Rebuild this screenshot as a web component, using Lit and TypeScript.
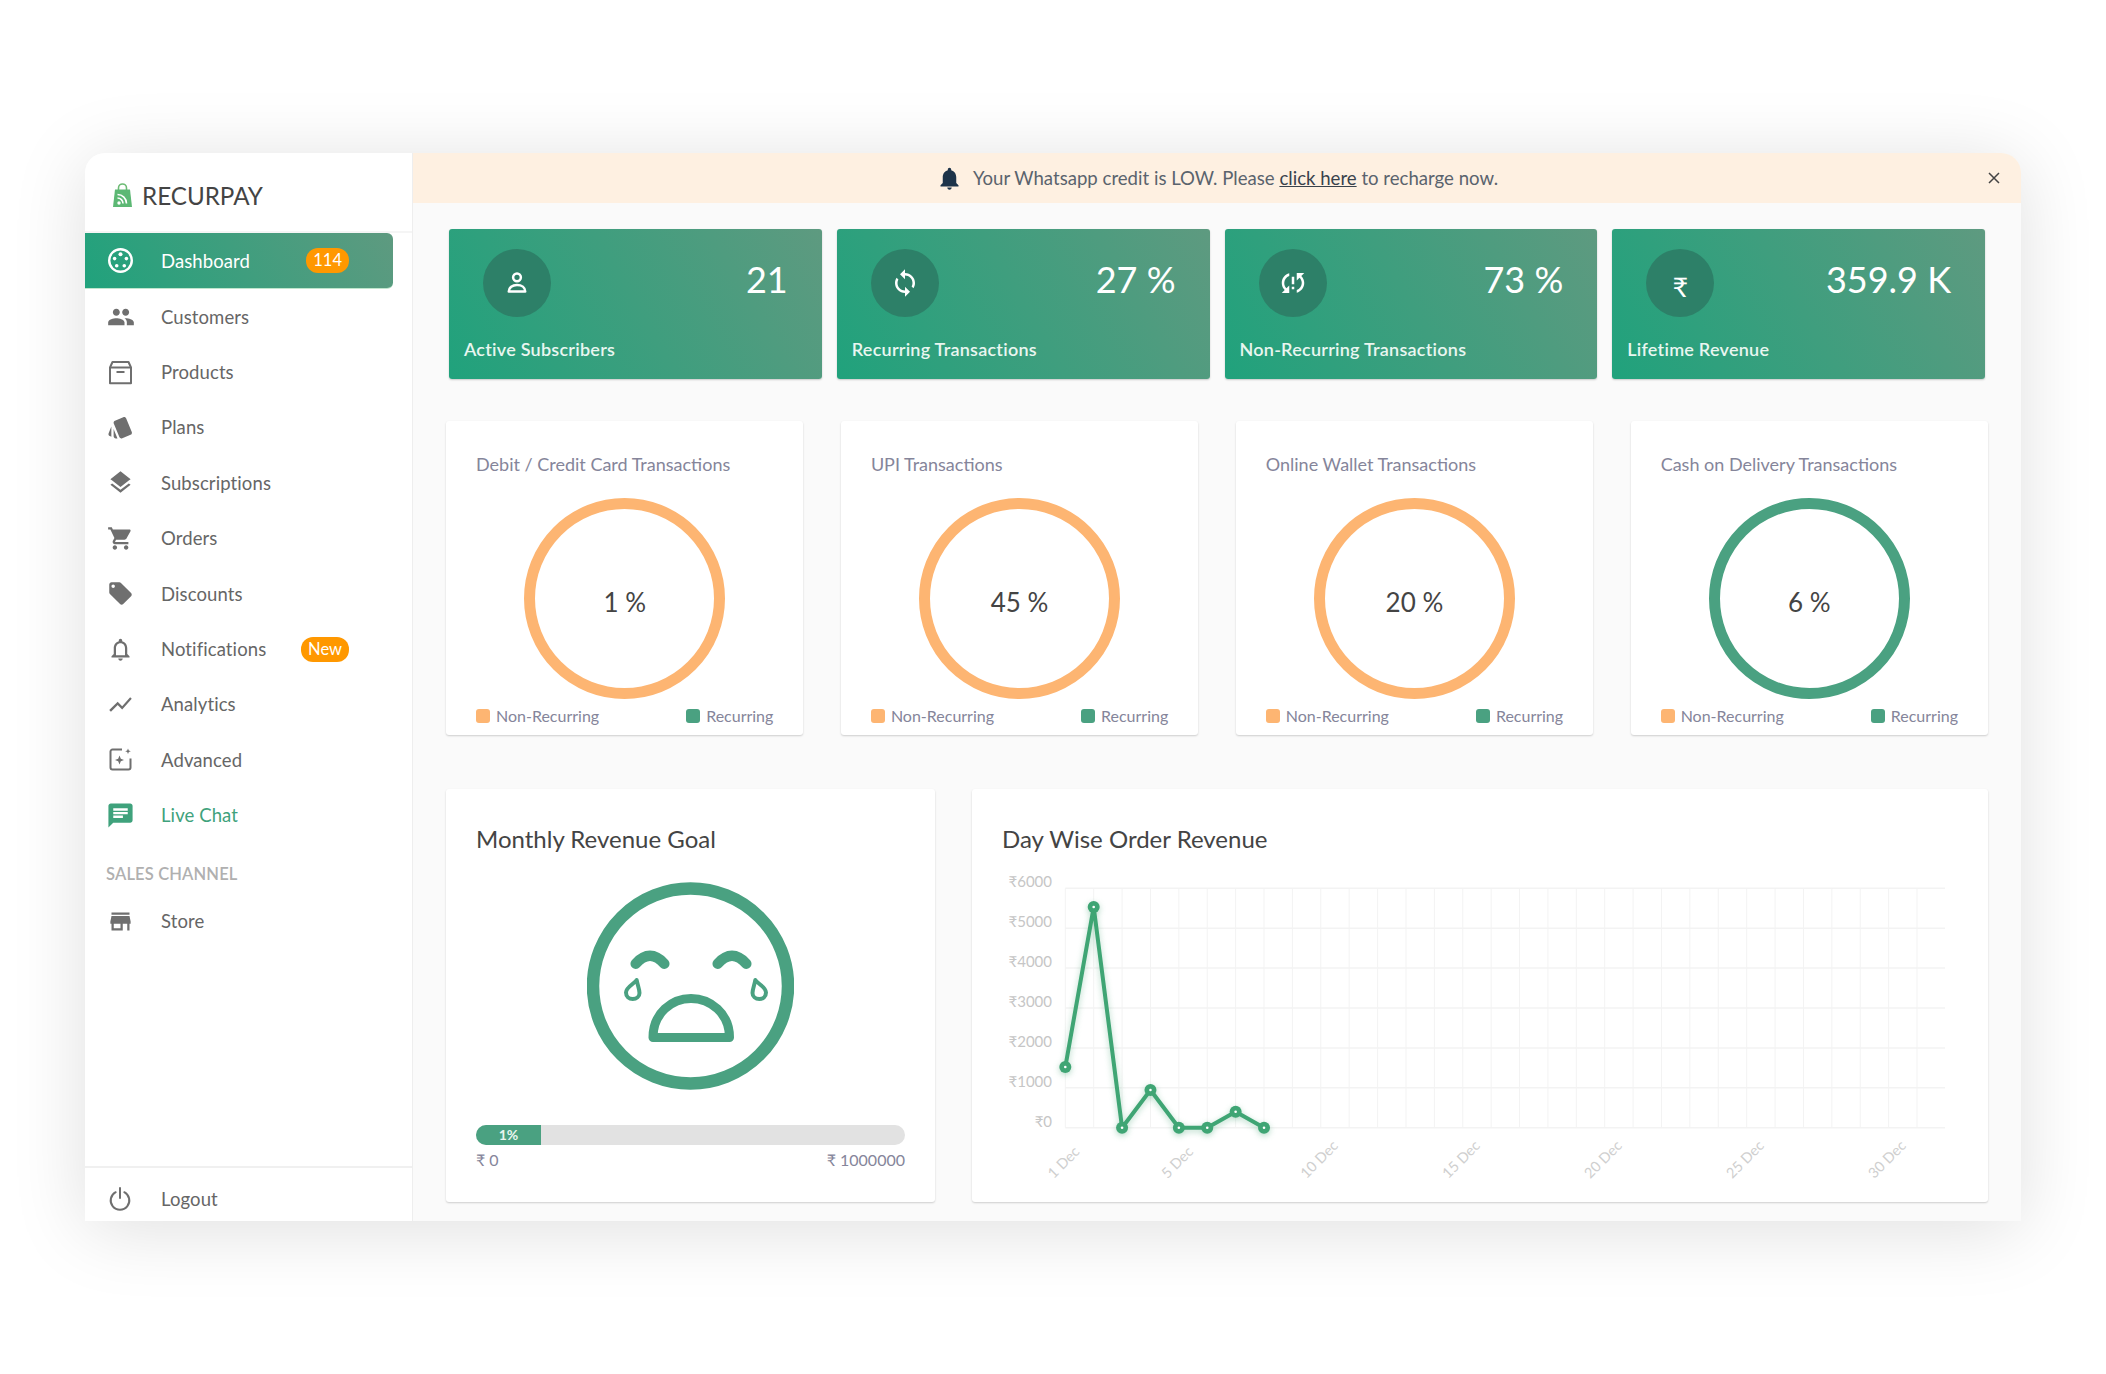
import { LitElement, css, html, svg } from "lit";
import { customElement } from "lit/decorators.js";

const icon = (d: string, size = 27) => html`<svg class="ic" width=${size} height=${size} viewBox="0 0 24 24" fill="currentColor"><path d=${d}></path></svg>`;

const ICONS: Record<string, any> = {
  dashboard: html`<svg class="ic" width="27" height="27" viewBox="0 0 27 27" fill="none"><circle cx="13.5" cy="13.5" r="11.3" stroke="currentColor" stroke-width="2.4"></circle><g fill="currentColor"><circle cx="13.5" cy="7.2" r="2"></circle><circle cx="7.6" cy="11.6" r="1.8"></circle><circle cx="19.4" cy="11.6" r="1.8"></circle><circle cx="9.7" cy="18.8" r="1.8"></circle><circle cx="17.3" cy="18.8" r="1.8"></circle></g></svg>`,
  customers: icon("M16 11c1.66 0 2.99-1.34 2.99-3S17.66 5 16 5c-1.66 0-3 1.34-3 3s1.34 3 3 3zm-8 0c1.66 0 2.99-1.34 2.99-3S9.66 5 8 5C6.34 5 5 6.34 5 8s1.34 3 3 3zm0 2c-2.33 0-7 1.17-7 3.5V19h14v-2.5c0-2.33-4.67-3.5-7-3.5zm8 0c-.29 0-.62.02-.97.05 1.16.84 1.97 1.97 1.97 3.45V19h6v-2.5c0-2.33-4.67-3.5-7-3.5z", 28),
  products: html`<svg class="ic" width="27" height="27" viewBox="0 0 27 27" fill="none" stroke="currentColor" stroke-width="2"><path d="M3 8.500 5.500 3h16L24 8.500V24.200H3z" stroke-linejoin="round"></path><path d="M3 8.500h21"></path><path d="M9.500 13h8"></path></svg>`,
  plans: icon("M2.53 19.65l1.34.56v-9.03l-2.43 5.86c-.41 1.02.08 2.19 1.09 2.61zm19.5-3.7L17.07 3.98c-.31-.75-1.04-1.21-1.81-1.23-.26 0-.53.04-.79.15L7.1 5.95c-.75.31-1.21 1.03-1.23 1.8-.01.27.04.54.15.8l4.96 11.97c.31.76 1.05 1.22 1.83 1.23.26 0 .52-.05.77-.15l7.36-3.05c1.02-.42 1.51-1.59 1.09-2.6zm-16.150 3.800c0 1.1.9 2 2 2h1.450l-3.450-8.340v6.340z"),
  subscriptions: icon("M11.99 18.54l-7.37-5.73L3 14.07l9 7 9-7-1.63-1.27-7.38 5.74zM12 16l7.36-5.73L21 9l-9-7-9 7 1.63 1.27L12 16z"),
  orders: icon("M7 18c-1.1 0-1.99.9-1.99 2S5.9 22 7 22s2-.9 2-2-.9-2-2-2zM1 2v2h2l3.6 7.59-1.35 2.45c-.16.28-.25.61-.25.96 0 1.1.9 2 2 2h12v-2H7.42c-.14 0-.25-.11-.25-.25l.03-.12.9-1.63h7.45c.75 0 1.41-.41 1.75-1.03l3.58-6.49c.08-.14.12-.31.12-.48 0-.55-.45-1-1-1H5.21l-.94-2H1zm16 16c-1.1 0-1.99.9-1.99 2s.89 2 1.99 2 2-.9 2-2-.9-2-2-2z"),
  discounts: icon("M21.41 11.58l-9-9C12.05 2.22 11.55 2 11 2H4c-1.1 0-2 .9-2 2v7c0 .55.22 1.05.59 1.42l9 9c.36.36.86.58 1.41.58.55 0 1.05-.22 1.41-.59l7-7c.37-.36.59-.86.59-1.41 0-.55-.23-1.06-.59-1.42zM5.5 7C4.67 7 4 6.33 4 5.5S4.67 4 5.5 4 7 4.67 7 5.5 6.33 7 5.5 7z"),
  notifications: icon("M12 22c1.1 0 2-.9 2-2h-4c0 1.1.9 2 2 2zm6-6v-5c0-3.07-1.63-5.64-4.5-6.32V4c0-.83-.67-1.5-1.5-1.5s-1.5.67-1.5 1.5v.68C7.64 5.36 6 7.92 6 11v5l-2 2v1h16v-1l-2-2zm-2 1H8v-6c0-2.48 1.51-4.5 4-4.5s4 2.02 4 4.5v6z"),
  analytics: icon("M3.5 18.49l6-6.01 4 4L22 6.92l-1.41-1.41-7.09 7.97-4-4L2 16.99z"),
  advanced: html`<svg class="ic" width="27" height="27" viewBox="0 0 27 27" fill="none"><path d="M15 3.500H5.500a2 2 0 0 0-2 2v16a2 2 0 0 0 2 2h16a2 2 0 0 0 2-2V12.500" stroke="currentColor" stroke-width="2"></path><path fill="currentColor" d="M12.500 9.500l1.300 3.200 3.200 1.300-3.200 1.300-1.300 3.200-1.300-3.200-3.200-1.300 3.200-1.300zM21 2.500l.8 2 2 .8-2 .8-.8 2-.8-2-2-.8 2-.8z"></path></svg>`,
  chat: icon("M20 2H4c-1.1 0-1.99.9-1.99 2L2 22l4-4h14c1.1 0 2-.9 2-2V4c0-1.1-.9-2-2-2zM6 9h12v2H6V9zm8 5H6v-2h8v2zm4-6H6V6h12v2z", 29),
  store: icon("M20 4H4v2h16V4zm1 10v-2l-1-5H4l-1 5v2h1v6h10v-6h4v6h2v-6h1zm-9 4H6v-4h6v4z"),
  logout: html`<svg class="ic" width="27" height="27" viewBox="0 0 27 27" fill="none" stroke="currentColor" stroke-width="2" stroke-linecap="round"><path d="M8.700 7.200a9.300 9.300 0 1 0 8.600 0"></path><path d="M13 3v10"></path></svg>`,
};

const NAV = [
  { key: "dashboard", label: "Dashboard", badge: "114", active: true },
  { key: "customers", label: "Customers" },
  { key: "products", label: "Products" },
  { key: "plans", label: "Plans" },
  { key: "subscriptions", label: "Subscriptions" },
  { key: "orders", label: "Orders" },
  { key: "discounts", label: "Discounts" },
  { key: "notifications", label: "Notifications", badge: "New" },
  { key: "analytics", label: "Analytics" },
  { key: "advanced", label: "Advanced" },
  { key: "chat", label: "Live Chat", live: true },
];

const statIcon = {
  person: html`<svg width="32" height="32" viewBox="0 0 28 28" fill="none" stroke="#fff" stroke-width="2.200"><circle cx="14" cy="9" r="3.400"></circle><path d="M6.800 21.500c0-3.600 3.200-5.800 7.200-5.800s7.200 2.200 7.200 5.800z" stroke-linejoin="round"></path></svg>`,
  sync: html`<svg width="30" height="30" viewBox="0 0 24 24" fill="#fff"><path d="M12 4V1L8 5l4 4V6c3.31 0 6 2.69 6 6 0 1.01-.25 1.97-.7 2.8l1.46 1.46C19.54 15.03 20 13.57 20 12c0-4.42-3.58-8-8-8zm0 14c-3.310 0-6-2.690-6-6 0-1.010.25-1.970.7-2.800L5.240 7.740C4.460 8.970 4 10.430 4 12c0 4.420 3.580 8 8 8v3l4-4-4-4v3z"></path></svg>`,
  problem: html`<svg width="30" height="30" viewBox="0 0 24 24" fill="#fff"><path d="M3 12c0 2.21.91 4.2 2.36 5.64L3 20h6v-6l-2.24 2.24C5.68 15.15 5 13.66 5 12c0-2.61 1.67-4.83 4-5.65V4.26C5.55 5.15 3 8.27 3 12zm8 5h2v-2h-2v2zM21 4h-6v6l2.24-2.24C18.32 8.85 19 10.34 19 12c0 2.61-1.67 4.83-4 5.65v2.09c3.45-.89 6-4.01 6-7.740 0-2.210-.91-4.200-2.360-5.640L21 4zm-10 9h2V7h-2v6z"></path></svg>`,
  rupee: html`<span class="rupee">₹</span>`,
};

const STATS = [
  { icon: statIcon.person, value: "21", label: "Active Subscribers" },
  { icon: statIcon.sync, value: "27 %", label: "Recurring Transactions" },
  { icon: statIcon.problem, value: "73 %", label: "Non-Recurring Transactions" },
  { icon: statIcon.rupee, value: "359.9 K", label: "Lifetime Revenue" },
];

const DONUTS = [
  { title: "Debit / Credit Card Transactions", value: "1 %", color: "#fdb572" },
  { title: "UPI Transactions", value: "45 %", color: "#fdb572" },
  { title: "Online Wallet Transactions", value: "20 %", color: "#fdb572" },
  { title: "Cash on Delivery Transactions", value: "6 %", color: "#4aa181" },
];

// chart scale, in page pixels
const X0 = 1065.3;
const DX = 28.39;
const Y0 = 1127.7;
const DY = 39.9;
const REVENUE = [1520, 5530, 0, 944, 0, 0, 400, 0];
const px = (i: number) => X0 + i * DX;
const py = (v: number) => Y0 - (v / 1000) * DY;

@customElement("app-root")
export class AppRoot extends LitElement {
  static styles = css`
    :host {
      display: block;
      width: 2106px;
      height: 1374px;
      box-sizing: border-box;
      padding: 153px 85px 0 85px;
      background: #fff;
      font-family: "Lato", "Noto Sans", sans-serif;
      color: #5f5f5f;
    }
    * { box-sizing: border-box; }
    .window {
      display: flex;
      height: 1068px;
      border-radius: 20px 20px 0 0;
      background: #fafafa;
      box-shadow: 0 8px 75px rgba(0, 0, 0, 0.13);
      overflow: hidden;
    }
    .sidebar {
      display: flex;
      flex-direction: column;
      width: 328px;
      flex: none;
      background: #fff;
      border-right: 1px solid #eee;
    }
    .logo {
      display: flex;
      align-items: center;
      gap: 10px;
      height: 80px;
      padding: 6px 0 0 28px;
      border-bottom: 2px solid #f5f5f5;
      font-size: 24.200px;
      color: #444;
    }
    .nav { flex: 1; }
    .item {
      display: flex;
      align-items: center;
      width: 308px;
      height: 55.400px;
      padding: 0 44px 0 22px;
      font-size: 18.500px;
      color: #666;
      letter-spacing: 0.1px;
    }
    .item .box { display: flex; justify-content: center; width: 27px; margin-right: 27px; color: #6f6f6f; }
    .item.active {
      height: 56px;
      border-radius: 0 6px 6px 0;
      background: linear-gradient(60deg, #20a27c, #5e9a80);
      border-bottom: 1px solid #bfe6cd;
      color: #fff;
    }
    .item.active .box { color: #fff; }
    .item.live, .item.live .box { color: #3fa27c; }
    .ic { display: block; flex: none; }
    .badge {
      margin-left: auto;
      height: 25px;
      padding: 0 7px;
      border-radius: 12px;
      background: #ff9800;
      color: #fff;
      font-size: 16.500px;
      line-height: 25px;
      letter-spacing: 0;
    }
    .heading {
      padding: 20px 0 0 21px;
      height: 50.600px;
      font-size: 16.500px;
      font-weight: 600;
      line-height: 22px;
      color: #b0b0b0;
      letter-spacing: 0.15px;
    }
    .logout { border-top: 2px solid #f0f0f0; height: 55px; }
    .logout .item { height: 63px; padding-left: 22px; margin-top: -1px; }

    .page { flex: 1; min-width: 0; }
    .banner {
      display: grid;
      grid-template-columns: 1fr auto 1fr;
      align-items: center;
      height: 50px;
      background: #fef0e1;
      font-size: 18.600px;
      color: #5a636d;
    }
    .banner .msg { display: flex; align-items: center; gap: 10px; grid-column: 2; }
    .banner a { color: #39424c; text-decoration: underline; }
    .banner .close { justify-self: end; margin-right: 20px; display: block; }
    .main { padding: 26px 33px 0 33px; }
    .stats { display: grid; grid-template-columns: repeat(4, 1fr); gap: 15px; margin: 0 3px; }
    .stat {
      height: 150px;
      padding-top: 20px;
      border-radius: 3px;
      background: linear-gradient(60deg, #20a27c, #5e9a80);
      box-shadow: 0 1px 2px rgba(0, 0, 0, 0.2);
      color: #fff;
    }
    .stat .top { display: flex; justify-content: space-between; padding: 0 34px; }
    .stat .circle {
      display: flex;
      align-items: center;
      justify-content: center;
      width: 68px;
      height: 68px;
      border-radius: 50%;
      background: #2d8068;
    }
    .rupee { font-size: 27px; line-height: 1; margin-top: 6px; }
    .stat .value { font-size: 36px; line-height: 44px; margin-top: 8px; }
    .stat .label { margin-top: 20px; padding-left: 15px; font-size: 18px; line-height: 24px; color: #e9f6f0; font-weight: 600; letter-spacing: 0.25px; }

    .donuts { display: grid; grid-template-columns: repeat(4, 1fr); gap: 37.500px; margin-top: 42px; }
    .card {
      background: #fff;
      border-radius: 3px;
      box-shadow: 0 1px 2px rgba(0, 0, 0, 0.18);
    }
    .donut { height: 314px; padding: 31px 30px 0; }
    .donut .title { font-size: 18px; line-height: 24px; color: #85859a; }
    .ring {
      display: flex;
      align-items: center;
      justify-content: center;
      width: 201px;
      height: 201px;
      margin: 22px auto 0;
      padding-top: 7px;
      border: 11px solid;
      border-radius: 50%;
      font-size: 26px;
      color: #444;
    }
    .legend { display: flex; justify-content: space-between; margin-top: 7px; font-size: 16px; line-height: 20px; color: #85859a; }
    .legend span { display: flex; align-items: center; gap: 6px; }
    .legend i { width: 14px; height: 14px; border-radius: 3px; }

    .bottom { display: grid; grid-template-columns: 489px 1016px; gap: 37px; margin-top: 54px; }
    .panel { height: 413px; padding-top: 34px; }
    .panel h2 { margin: 0; padding: 0 30px; font-size: 24px; font-weight: 400; line-height: 32px; color: #444; }
    .face { display: block; margin: 27px auto 0; }
    .goal { padding: 35px 30px 0; }
    .track { height: 20px; border-radius: 10px; background: #e2e2e2; overflow: hidden; }
    .fill { height: 100%; background: #4aa181; color: #e8f5ef; font-size: 14px; font-weight: 700; line-height: 20px; text-align: center; }
    .range { display: flex; justify-content: space-between; margin-top: 5px; font-size: 16px; line-height: 20px; color: #85859a; }
    .chart { display: block; margin-top: 20px; font-family: "Lato", "Noto Sans", sans-serif; }
  `;

  private renderChart() {
    const line = REVENUE.map((v, i) => `${px(i)},${py(v)}`).join(" ");
    return html`<svg class="chart" width="1016" height="327" viewBox="972 875 1016 327" fill="none">
      ${[0, 1, 2, 3, 4, 5, 6].map((k) => svg`
        <line x1=${X0} x2="1945" y1=${Y0 - k * DY} y2=${Y0 - k * DY} stroke="#f3f3f3" stroke-width="1.500"></line>
        <text x="1052" y=${Y0 - k * DY - 7} text-anchor="end" dominant-baseline="central" font-size="15" fill="#c6c6c6">₹${k * 1000}</text>`)}
      ${Array.from({ length: 31 }, (_, i) => svg`<line x1=${px(i)} x2=${px(i)} y1=${Y0 - 6 * DY} y2=${Y0} stroke="#f3f3f3"></line>`)}
      ${[1, 5, 10, 15, 20, 25, 30].map((d) => {
        const x = px(d - 1) - 2;
        const y = d < 10 ? 1162 : 1159;
        return svg`<text x=${x} y=${y} transform="rotate(-45 ${x} ${y})" text-anchor="middle" dominant-baseline="central" font-size="14.500" fill="#cfcfcf">${d} Dec</text>`;
      })}
      <g style="filter: drop-shadow(0 2px 3px rgba(64, 160, 112, 0.4))">
        <polyline points=${line} stroke="#3fa574" stroke-width="4" stroke-linejoin="round"></polyline>
        ${REVENUE.map((v, i) => svg`<circle cx=${px(i)} cy=${py(v)} r="6" fill="#3fa574"></circle><circle cx=${px(i)} cy=${py(v)} r="1.300" fill="#fff"></circle>`)}
      </g>
    </svg>`;
  }

  render() {
    return html`
      <div class="window">
        <aside class="sidebar">
          <div class="logo">
            <svg class="ic" width="19" height="24" viewBox="0 0 19 24">
              <path d="M5.500 7V5a4 4 0 0 1 8 0v2" fill="none" stroke="#6dbb75" stroke-width="1.600"></path>
              <path d="M2 6.500h15l2 17.500H0z" fill="#5cb874"></path>
              <g fill="none" stroke="#fff" stroke-width="1.600"><path d="M4.500 11.500a9 9 0 0 1 9 9"></path><path d="M4.500 15a5.500 5.500 0 0 1 5.500 5.500"></path></g>
              <circle cx="6" cy="20" r="1.700" fill="#fff"></circle>
            </svg>
            RECURPAY
          </div>
          <div class="nav">
            ${NAV.map((n) => html`
              <div class="item ${n.active ? "active" : ""} ${n.live ? "live" : ""}">
                <span class="box">${ICONS[n.key]}</span>${n.label}
                ${n.badge ? html`<span class="badge">${n.badge}</span>` : ""}
              </div>`)}
            <div class="heading">SALES CHANNEL</div>
            <div class="item"><span class="box">${ICONS.store}</span>Store</div>
          </div>
          <div class="logout">
            <div class="item"><span class="box">${ICONS.logout}</span>Logout</div>
          </div>
        </aside>
        <div class="page">
          <div class="banner">
            <div class="msg">
              <svg class="ic" width="27" height="27" viewBox="0 0 24 24" fill="#1d3349"><path d="M12 22c1.100 0 2-.9 2-2h-4c0 1.100.89 2 2 2zm6-6v-5c0-3.070-1.640-5.640-4.500-6.320V4c0-.83-.67-1.500-1.500-1.500s-1.500.67-1.500 1.500v.68C7.630 5.360 6 7.920 6 11v5l-2 2v1h16v-1l-2-2z"></path></svg>
              <span>Your Whatsapp credit is LOW. Please <a>click here</a> to recharge now.</span>
            </div>
            <svg class="close" width="14" height="14" viewBox="0 0 14 14" stroke="#444" stroke-width="1.500"><path d="M2 2l10 10M12 2L2 12"></path></svg>
          </div>
          <div class="main">
            <div class="stats">
              ${STATS.map((s) => html`
                <div class="stat">
                  <div class="top"><div class="circle">${s.icon}</div><div class="value">${s.value}</div></div>
                  <div class="label">${s.label}</div>
                </div>`)}
            </div>
            <div class="donuts">
              ${DONUTS.map((d) => html`
                <div class="card donut">
                  <div class="title">${d.title}</div>
                  <div class="ring" style="border-color: ${d.color}">${d.value}</div>
                  <div class="legend">
                    <span><i style="background: #fdb572"></i>Non-Recurring</span>
                    <span><i style="background: #4aa181"></i>Recurring</span>
                  </div>
                </div>`)}
            </div>
            <div class="bottom">
              <div class="card panel">
                <h2>Monthly Revenue Goal</h2>
                <svg class="face" width="207" height="208" viewBox="0 0 207 208" fill="none" stroke="#4aa181" stroke-linecap="round" stroke-linejoin="round">
                  <circle cx="103.500" cy="104" r="97.500" stroke-width="12.500"></circle>
                  <path d="M48.700 81.700Q63 66 77.300 81.700M130.700 81.700Q145 66 159.300 81.700" stroke-width="10.500"></path>
                  <path d="M49.700 98C47 102 39 105 39 110.500C39 114.500 42 117 45.700 117C49.500 117 52.500 114.500 52.500 111C52.500 107 50.500 103 49.700 98Z" stroke-width="4"></path>
                  <path d="M168.300 98C171 102 179 105 179 110.500C179 114.500 176 117 172.300 117C168.500 117 165.500 114.500 165.500 111C165.500 107 167.500 103 168.300 98Z" stroke-width="4"></path>
                  <path d="M66 155.500C66 131 85 116.500 104 116.500C123 116.500 142.500 131 142.500 155.500Z" stroke-width="9"></path>
                </svg>
                <div class="goal">
                  <div class="track"><div class="fill" style="width: 65px">1%</div></div>
                  <div class="range"><span>₹ 0</span><span>₹ 1000000</span></div>
                </div>
              </div>
              <div class="card panel">
                <h2>Day Wise Order Revenue</h2>
                ${this.renderChart()}
              </div>
            </div>
          </div>
        </div>
      </div>
    `;
  }
}
